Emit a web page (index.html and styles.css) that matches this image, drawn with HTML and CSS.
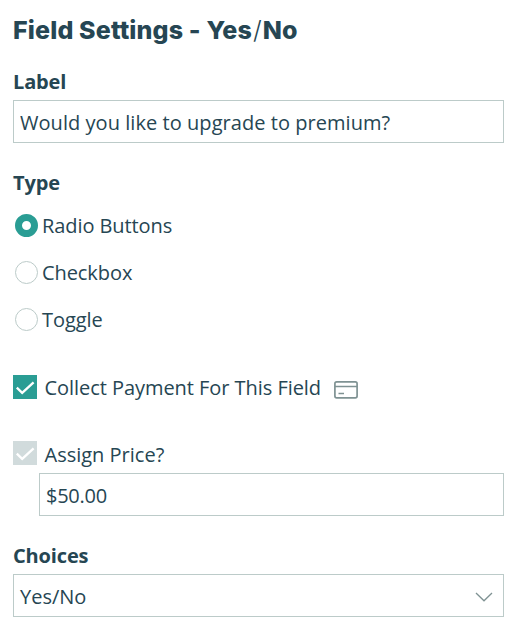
FILE: index.html
```html
<!DOCTYPE html>
<html lang="en">

<head>
    <meta charset="UTF-8">
    <meta name="viewport" content="width=device-width, initial-scale=1.0">
    <title>Field Settings</title>
    <link rel="stylesheet" href="styles.css">
</head>

<body>
    <form class="settings">
        <h2 class="settings-title">Field Settings - Yes<span class="slash">/</span>No</h2>

        <!-- Label -->
        <div class="field-group">
            <label class="field-label" for="fieldLabel">Label</label>
            <input class="text-input label-input" type="text" id="fieldLabel" value="Would you like to upgrade to premium?">
        </div>

        <!-- Type -->
        <div class="field-group type-group">
            <span class="field-label">Type</span>
            <label class="radio-row"><input type="radio" name="type" checked>Radio Buttons</label>
            <label class="radio-row"><input type="radio" name="type">Checkbox</label>
            <label class="radio-row"><input type="radio" name="type">Toggle</label>
        </div>

        <!-- Payment -->
        <div class="check-row payment-row">
            <span class="check-box">
                <svg width="24" height="24" viewBox="0 0 24 24"><path d="M3.8 12.6l5.4 5.3L20.6 7.3" /></svg>
            </span>
            <span class="payment-text">Collect Payment For This Field</span>
            <svg class="card-icon" width="24" height="18" viewBox="0 0 24 18">
                <rect x="0.9" y="0.9" width="22.2" height="15.9" rx="1.8" />
                <path d="M1 5.5h22M4.5 12.5h5.5" />
            </svg>
        </div>

        <!-- Price -->
        <div class="check-row price-row">
            <span class="check-box disabled">
                <svg width="24" height="24" viewBox="0 0 24 24"><path d="M3.8 12.6l5.4 5.3L20.6 7.3" /></svg>
            </span>
            <span class="price-text">Assign Price?</span>
        </div>
        <input class="text-input price-input" type="text" value="$50.00">

        <!-- Choices -->
        <div class="field-group choices-group">
            <span class="field-label">Choices</span>
            <div class="select-box">
                <span>Yes/No</span>
                <svg width="18" height="10" viewBox="0 0 18 10"><path d="M1 1l8 7.8L17 1" /></svg>
            </div>
        </div>
    </form>
</body>

</html>
```

FILE: styles.css
```css
* {
    margin: 0;
    padding: 0;
    box-sizing: border-box;
}

:root {
    --text: #264653;
    --accent: #2a9d94;
    --border: #bccbc9;
    --disabled: #d1dbdc;
    --icon: #7f9293;
}

body {
    font-family: "Open Sans", "Noto Sans", sans-serif;
    font-size: 20px;
    color: var(--text);
    background: #fff;
}

.settings {
    padding: 12px 17px 0 13px;
}

.settings-title {
    font-family: "Inter", sans-serif;
    font-size: 25px;
    font-weight: 800;
    line-height: 37px;
    letter-spacing: 0.15px;
    white-space: nowrap;
}

.slash {
    padding: 0 1px;
    font-weight: 300;
}

.field-group {
    display: flex;
    flex-direction: column;
    margin-top: 18px;
}

.field-label {
    font-weight: 700;
    line-height: 30px;
    margin-bottom: 3px;
    letter-spacing: -0.15px;
}

/* Inputs */
.text-input,
.select-box {
    width: 100%;
    height: 43px;
    padding: 2px 6px 0;
    border: 1px solid var(--border);
    background: #fff;
    color: var(--text);
    font: inherit;
}

.label-input {
    letter-spacing: 0.05px;
}

.select-box {
    display: flex;
    align-items: center;
    justify-content: space-between;
    padding-right: 10px;
}

.select-box path {
    fill: none;
    stroke: var(--icon);
    stroke-width: 1.3;
}

/* Radios */
.type-group {
    margin-top: 25px;
}

.type-group .field-label {
    margin-bottom: 4px;
}

.radio-row {
    display: flex;
    align-items: center;
    gap: 4px;
    height: 47px;
    padding-left: 2px;
    letter-spacing: -0.08px;
}

.radio-row input {
    appearance: none;
    width: 23px;
    height: 23px;
    border: 1px solid var(--border);
    border-radius: 50%;
}

.radio-row input:checked {
    border: 7px solid var(--accent);
}

/* Checkboxes */
.check-row {
    display: flex;
    align-items: center;
    height: 24px;
}

.payment-row {
    margin-top: 32px;
}

.payment-text {
    letter-spacing: -0.05px;
}

.price-row {
    margin-top: 42px;
}

.price-text {
    padding-top: 2px;
}

.check-box {
    width: 24px;
    height: 24px;
    margin-right: 7.5px;
    background: var(--accent);
}

.check-box.disabled {
    background: var(--disabled);
}

.check-box svg {
    display: block;
}

.check-box path {
    fill: none;
    stroke: #fff;
    stroke-width: 2.3;
}

.card-icon {
    margin: 5px 0 0 13px;
    fill: none;
    stroke: var(--icon);
    stroke-width: 1.7;
}

.price-input {
    display: block;
    width: calc(100% - 26px);
    margin: 8px 0 0 26px;
    letter-spacing: -0.25px;
}

.choices-group {
    margin-top: 25px;
}
```
